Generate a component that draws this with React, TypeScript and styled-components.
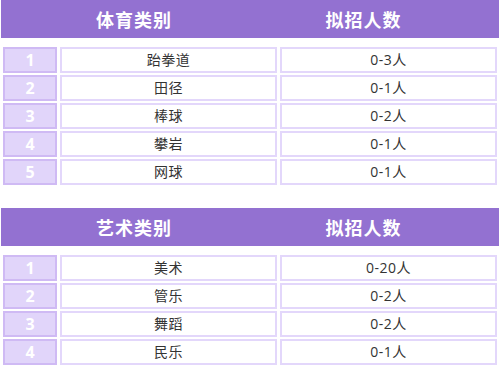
import React from "react";
import styled, { createGlobalStyle } from "styled-components";

const GlobalStyle = createGlobalStyle`
  html, body { margin: 0; padding: 0; background: #ffffff; }
  body { font-family: "Noto Sans CJK SC", "Noto Sans", sans-serif; }
`;

const Page = styled.div`
  width: 498px;
  padding: 0 2px 0 1px;
  display: flex;
  flex-direction: column;
  gap: 23px;
`;

const Section = styled.section`
  display: flex;
  flex-direction: column;
  gap: 9px;
`;

const Header = styled.div`
  height: 38px;
  background: #9371d1;
  display: grid;
  grid-template-columns: 266px 193px;
  align-items: center;
`;

const HeaderCell = styled.div`
  text-align: center;
  color: #ffffff;
  font-weight: 700;
  font-size: 18px;
  letter-spacing: 1px;
  line-height: 38px;
`;

const Rows = styled.div`
  display: flex;
  flex-direction: column;
  gap: 2px;
  padding: 0 2px;
`;

const Row = styled.div`
  display: grid;
  grid-template-columns: 54px 217px 217px;
  column-gap: 3px;
  height: 26px;
`;

const Cell = styled.div<{ $index?: boolean }>`
  box-sizing: border-box;
  border: 2px solid ${(p) => (p.$index ? "#cfbaf4" : "#e3d7fb")};
  background: ${(p) => (p.$index ? "#e1d5fa" : "#ffffff")};
  color: ${(p) => (p.$index ? "#ffffff" : "#333333")};
  font-family: "Open Sans", "Noto Sans CJK SC", sans-serif;
  font-weight: ${(p) => (p.$index ? 700 : 400)};
  font-size: ${(p) => (p.$index ? "16px" : "14px")};
  letter-spacing: ${(p) => (p.$index ? "0" : "0.5px")};
  display: flex;
  align-items: center;
  justify-content: center;
  line-height: 1;
`;

type Item = [string, string];

const sports: Item[] = [
  ["跆拳道", "0-3人"],
  ["田径", "0-1人"],
  ["棒球", "0-2人"],
  ["攀岩", "0-1人"],
  ["网球", "0-1人"],
];

const arts: Item[] = [
  ["美术", "0-20人"],
  ["管乐", "0-2人"],
  ["舞蹈", "0-2人"],
  ["民乐", "0-1人"],
];

function Table({ title, items }: { title: string; items: Item[] }) {
  return (
    <Section>
      <Header>
        <HeaderCell>{title}</HeaderCell>
        <HeaderCell>拟招人数</HeaderCell>
      </Header>
      <Rows>
        {items.map(([name, count], i) => (
          <Row key={name}>
            <Cell $index>{i + 1}</Cell>
            <Cell>{name}</Cell>
            <Cell>{count}</Cell>
          </Row>
        ))}
      </Rows>
    </Section>
  );
}

export default function App() {
  return (
    <>
      <GlobalStyle />
      <Page>
        <Table title="体育类别" items={sports} />
        <Table title="艺术类别" items={arts} />
      </Page>
    </>
  );
}
